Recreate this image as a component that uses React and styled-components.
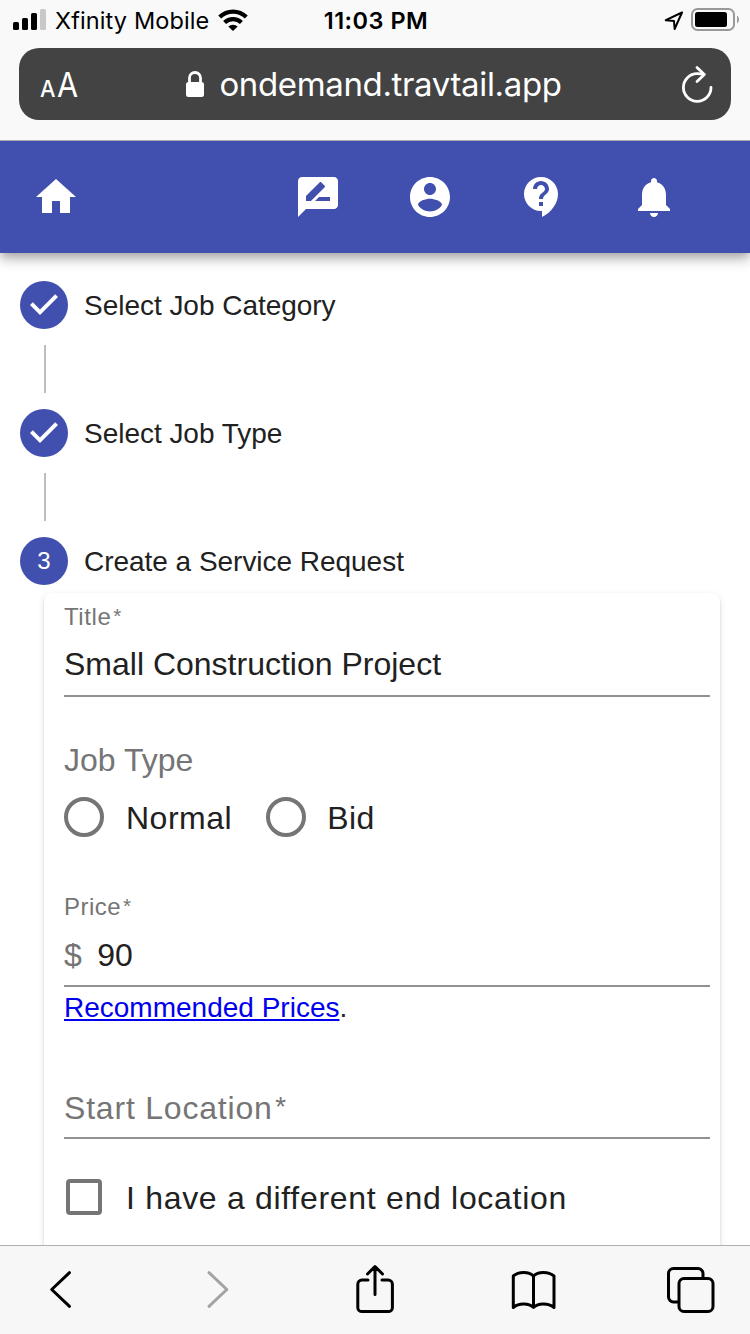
import React from "react";
import styled, { createGlobalStyle } from "styled-components";

const GlobalStyle = createGlobalStyle`
  * { box-sizing: border-box; }
  body { margin: 0; background: #fff; }
`;

const Screen = styled.div`
  width: 750px;
  height: 1334px;
  display: flex;
  flex-direction: column;
  overflow: hidden;
  background: #fff;
  color: #212121;
  font-family: "Liberation Sans", Arial, sans-serif;
`;

const Chrome = styled.header`
  position: relative;
  z-index: 2;
  flex: none;
  height: 141px;
  background: #f9f9f9;
  border-bottom: 1px solid #a9aaab;
  color: #000;
  font-family: Inter, sans-serif;
`;

const StatusBar = styled.div`
  display: grid;
  grid-template-columns: 1fr auto 1fr;
  align-items: center;
  height: 40px;
  padding: 0 11px 0 13px;
`;

const StatusGroup = styled.div`
  display: flex;
  align-items: center;
  justify-content: ${(p) => (p.$end ? "flex-end" : "flex-start")};
  gap: ${(p) => (p.$end ? 7 : 9)}px;
`;

const Carrier = styled.span`
  padding-top: 2px;
  font-size: 23.5px;
  line-height: 38px;
  letter-spacing: 0.12px;
  white-space: nowrap;
`;

const Clock = styled.span`
  padding-top: 2px;
  font-size: 23.5px;
  font-weight: 600;
  line-height: 38px;
  letter-spacing: 0.5px;
`;

const AddressBar = styled.div`
  display: grid;
  grid-template-columns: 60px 1fr 60px;
  align-items: center;
  height: 72px;
  margin: 8px 19px 0;
  padding: 0 18px 0 21px;
  border-radius: 20px;
  background: #434343;
  color: #fff;
`;

const TextSize = styled.div`
  display: flex;
  align-items: baseline;
  gap: 1px;
  padding-top: 2px;
  line-height: 70px;
`;

const Letter = styled.span`
  font-size: ${(p) => p.$size}px;
  font-weight: ${(p) => p.$weight};
  transform: scaleX(${(p) => p.$stretch});
  transform-origin: left;
`;

const Address = styled.div`
  display: flex;
  align-items: center;
  justify-content: center;
  gap: 14px;
  padding: 0 6px 4px 0;
  font-size: 33px;
  line-height: 68px;
  letter-spacing: -0.35px;
  white-space: nowrap;
`;

const ReloadSlot = styled.div`
  display: flex;
  justify-content: flex-end;
  padding-bottom: 3px;
`;

const AppBar = styled.nav`
  position: relative;
  z-index: 1;
  flex: none;
  display: flex;
  align-items: center;
  gap: 64px;
  height: 112px;
  padding: 0 72px 0 32px;
  background: #4150af;
  box-shadow: 0 4px 8px -2px rgba(0, 0, 0, 0.2), 0 8px 10px rgba(0, 0, 0, 0.14),
    0 2px 20px rgba(0, 0, 0, 0.12);
`;

const NavIcon = styled.svg`
  width: 48px;
  height: 48px;
  fill: #fff;
  margin-right: ${(p) => (p.$lead ? "auto" : "0")};
`;

const Stepper = styled.main`
  flex: 1;
  min-height: 0;
  overflow: hidden;
  padding: 28px 30px 0 20px;
`;

const StepRow = styled.div`
  display: flex;
  align-items: center;
  gap: 16px;
  height: 48px;
`;

const StepBadge = styled.div`
  display: flex;
  align-items: center;
  justify-content: center;
  width: 48px;
  height: 48px;
  border-radius: 50%;
  background: #4150af;
  color: #fff;
  font-size: 24px;
  svg { width: 48px; height: 48px; fill: #fff; }
`;

const StepLabel = styled.span`
  font-size: 28px;
  line-height: 40px;
  letter-spacing: -0.03px;
  padding-top: 2px;
`;

const Connector = styled.div`
  width: 2px;
  height: 48px;
  margin: 16px 0 16px 24px;
  background: #bdbdbd;
`;

const Card = styled.section`
  height: 760px;
  margin: 8px 0 0 24px;
  padding: 10px 10px 0 20px;
  border-radius: 8px;
  background: #fff;
  box-shadow: 0 4px 2px -2px rgba(0, 0, 0, 0.2), 0 2px 2px rgba(0, 0, 0, 0.14),
    0 2px 6px rgba(0, 0, 0, 0.12);
`;

const Field = styled.div`
  display: flex;
  flex-direction: column;
  border-bottom: 2px solid #919191;
  padding-bottom: ${(p) => p.$bottom}px;
  margin-top: ${(p) => p.$top || 0}px;
`;

const FieldLabel = styled.label`
  height: 28px;
  color: #757575;
  font-size: 24px;
  line-height: 28px;
  letter-spacing: ${(p) => p.$track}px;
`;

const Asterisk = styled.span`
  display: inline-block;
  margin-left: 0.09em;
  font-size: 0.86em;
  line-height: 1;
  vertical-align: 0.12em;
`;

const FieldValue = styled.div`
  display: flex;
  gap: 15.5px;
  margin-top: ${(p) => p.$top}px;
  font-size: 32px;
  line-height: 40px;
`;

const Caption = styled.div`
  height: 40px;
  color: #757575;
  font-size: 32px;
  line-height: 40px;
  letter-spacing: ${(p) => p.$track || 0}px;
  margin-top: ${(p) => p.$top || 0}px;
`;

const Muted = styled.span`
  color: #757575;
`;

const Options = styled.div`
  display: flex;
  align-items: center;
  gap: 34px;
  height: 40px;
  margin-top: ${(p) => p.$top}px;
`;

const Option = styled.label`
  display: flex;
  align-items: center;
  gap: ${(p) => p.$gap}px;
  font-size: 32px;
  line-height: 40px;
  letter-spacing: ${(p) => p.$track}px;
  padding-left: ${(p) => p.$inset || 0}px;
  white-space: nowrap;
`;

const OptionText = styled.span`
  padding-top: 2px;
`;

const Radio = styled.span`
  width: 40px;
  height: 40px;
  border: 4px solid #757575;
  border-radius: 50%;
`;

const Checkbox = styled.span`
  width: 36px;
  height: 36px;
  border: 4px solid #757575;
  border-radius: 4px;
`;

const Helper = styled.p`
  margin: 5px 0 0;
  font-size: 28px;
  line-height: 32px;
`;

const PriceLink = styled.a`
  color: #0000ee;
  text-decoration: underline;
  text-decoration-thickness: 2px;
  text-underline-offset: 2px;
  text-decoration-skip-ink: none;
`;

const Toolbar = styled.footer`
  position: relative;
  flex: none;
  display: flex;
  align-items: flex-start;
  justify-content: space-between;
  height: 89px;
  padding: 14px 30px 0;
  border-top: 1px solid #b0b0b0;
  background: #f7f7f7;
`;

const ToolIcon = styled.svg`
  width: 60px;
  height: 60px;
  fill: none;
  stroke: ${(p) => (p.$disabled ? "#a3a3a3" : "#000")};
  stroke-width: 3;
  stroke-linecap: round;
  stroke-linejoin: round;
`;

const HOME = "M10 20v-6h4v6h5v-8h3L12 3 2 12h3v8z";
const REVIEW =
  "M20 2H4c-1.1 0-1.99.9-1.99 2L2 22l4-4h14c1.1 0 2-.9 2-2V4c0-1.100-.9-2-2-2zM6 14v-2.470l6.880-6.880c.2-.2.510-.2.710 0l1.770 1.770c.2.2.2.510 0 .710L8.470 14H6zm12 0h-7.500l2-2H18v2z";
const ACCOUNT =
  "M12 2C6.48 2 2 6.48 2 12s4.48 10 10 10 10-4.48 10-10S17.52 2 12 2zm0 3c1.66 0 3 1.34 3 3s-1.34 3-3 3-3-1.34-3-3 1.34-3 3-3zm0 14.2c-2.5 0-4.71-1.28-6-3.22.03-1.99 4-3.08 6-3.08 1.99 0 5.97 1.09 6 3.08-1.29 1.94-3.5 3.22-6 3.22z";
const SUPPORT =
  "M11.5 2C6.81 2 3 5.81 3 10.5S6.81 19 11.5 19h.5v3c4.86-2.34 8-7 8-11.5C20 5.81 16.19 2 11.5 2zm1 14.5h-2v-2h2v2zm0-3.5h-2c0-3.25 3-3 3-5 0-1.1-.9-2-2-2s-2 .9-2 2h-2c0-2.21 1.79-4 4-4s4 1.79 4 4c0 2.5-3 2.75-3 5z";
const BELL =
  "M12 22c1.1 0 2-.9 2-2h-4c0 1.1.89 2 2 2zm6-6v-5c0-3.07-1.64-5.64-4.5-6.32V4c0-.83-.67-1.5-1.5-1.5s-1.5.67-1.5 1.5v.68C7.63 5.36 6 7.92 6 11v5l-2 2v1h16v-1l-2-2z";

const Nav = ({ d, lead }) => (
  <NavIcon viewBox="0 0 24 24" $lead={lead}>
    <path d={d} />
  </NavIcon>
);

const DoneStep = ({ children }) => (
  <>
    <StepRow>
      <StepBadge>
        <svg viewBox="0 0 24 24">
          <path d="M10 17l-5-5 1.4-1.4 3.6 3.6 7.6-7.6L19 8z" />
        </svg>
      </StepBadge>
      <StepLabel>{children}</StepLabel>
    </StepRow>
    <Connector />
  </>
);

const Signal = () => (
  <svg width="33" height="22" viewBox="0 0 33 22">
    <rect x="0" y="13" width="6" height="8" rx="1.5" />
    <rect x="9" y="9" width="6" height="12" rx="1.5" />
    <rect x="18" y="4" width="6" height="17" rx="1.5" />
    <rect x="27" y="0" width="6" height="21" rx="1.5" fill="#c8c8c8" />
  </svg>
);

const Wifi = () => (
  <svg width="30" height="22" viewBox="0 0 30 22" fill="none" stroke="#000" strokeWidth="4.2">
    <path d="M1.7 8a19 19 0 0 1 26.6 0" />
    <path d="M6.6 13.500a12 12 0 0 1 16.8 0" />
    <path d="M15 22l-4.700-4.400a6.700 6.700 0 0 1 9.400 0z" fill="#000" stroke="none" />
  </svg>
);

const Location = () => (
  <svg width="20" height="20" viewBox="0 0 20 20" fill="none" stroke="#000" strokeWidth="2" strokeLinejoin="round">
    <path d="M18 2.500L1.800 10.200l8.200.800.600 8z" />
  </svg>
);

const Battery = () => (
  <svg width="48" height="24" viewBox="0 0 48 24">
    <rect x="1" y="1" width="42" height="21" rx="5.5" fill="none" stroke="#999" strokeWidth="2" />
    <rect x="4" y="4" width="32" height="15" rx="2.5" />
    <path d="M46 7.5c2.6 1.6 2.6 6.4 0 8z" fill="#999" />
  </svg>
);

const Lock = () => (
  <svg width="20" height="28" viewBox="0 0 20 28">
    <rect x="1" y="12" width="18" height="15" rx="2.5" fill="#fff" />
    <path d="M4.500 13V8a5.500 5.500 0 0 1 11 0V13" fill="none" stroke="#fff" strokeWidth="2.8" />
  </svg>
);

const Reload = () => (
  <svg width="33" height="40" viewBox="0 0 33 40" fill="none" stroke="#fff" strokeWidth="2.8" strokeLinecap="round" strokeLinejoin="round">
    <path d="M31 22.500A13.800 13.800 0 1 1 17.200 8.700q3.600 0 6.800.6" />
    <path d="M17 2.500l7.300 7-7.300 7" />
  </svg>
);

export default function App() {
  return (
    <Screen>
      <GlobalStyle />
      <Chrome>
        <StatusBar>
          <StatusGroup>
            <Signal />
            <Carrier>Xfinity Mobile</Carrier>
            <Wifi />
          </StatusGroup>
          <Clock>11:03 PM</Clock>
          <StatusGroup $end>
            <Location />
            <Battery />
          </StatusGroup>
        </StatusBar>
        <AddressBar>
          <TextSize>
            <Letter $size={23} $weight={500} $stretch={0.95}>A</Letter>
            <Letter $size={34} $weight={400} $stretch={0.9}>A</Letter>
          </TextSize>
          <Address>
            <Lock />
            <span>ondemand.travtail.app</span>
          </Address>
          <ReloadSlot>
            <Reload />
          </ReloadSlot>
        </AddressBar>
      </Chrome>

      <AppBar>
        <Nav d={HOME} lead />
        <Nav d={REVIEW} />
        <Nav d={ACCOUNT} />
        <Nav d={SUPPORT} />
        <Nav d={BELL} />
      </AppBar>

      <Stepper>
        <DoneStep>Select Job Category</DoneStep>
        <DoneStep>Select Job Type</DoneStep>
        <StepRow>
          <StepBadge>3</StepBadge>
          <StepLabel>Create a Service Request</StepLabel>
        </StepRow>
        <Card>
          <Field $bottom={11}>
            <FieldLabel $track={0.6}>
              Title<Asterisk>*</Asterisk>
            </FieldLabel>
            <FieldValue $top={13}>Small Construction Project</FieldValue>
          </Field>
          <Caption $top={43}>Job Type</Caption>
          <Options $top={17}>
            <Option $gap={22} $track={0.5}>
              <Radio />
              <OptionText>Normal</OptionText>
            </Option>
            <Option $gap={21} $track={0.5}>
              <Radio />
              <OptionText>Bid</OptionText>
            </Option>
          </Options>
          <Field $bottom={10} $top={56}>
            <FieldLabel $track={0.5}>
              Price<Asterisk>*</Asterisk>
            </FieldLabel>
            <FieldValue $top={14}>
              <Muted>$</Muted>
              <span>90</span>
            </FieldValue>
          </Field>
          <Helper>
            <PriceLink>Recommended Prices</PriceLink>.
          </Helper>
          <Field $bottom={9} $top={64}>
            <Caption $track={0.8}>
              Start Location<Asterisk>*</Asterisk>
            </Caption>
          </Field>
          <Options $top={38}>
            <Option $gap={24} $inset={2} $track={0.7}>
              <Checkbox />
              <OptionText>I have a different end location</OptionText>
            </Option>
          </Options>
        </Card>
      </Stepper>

      <Toolbar>
        <ToolIcon viewBox="0 0 60 60">
          <path d="M39.5 12.7L21.7 29.5l17.8 16.8" />
        </ToolIcon>
        <ToolIcon viewBox="0 0 60 60" $disabled>
          <path d="M21 12.7l17.8 16.8L21 46.3" />
        </ToolIcon>
        <ToolIcon viewBox="0 0 60 60">
          <path d="M23 20h-6a4.2 4.2 0 0 0-4.2 4.2v23.2a4.2 4.2 0 0 0 4.2 4.2h26.2a4.2 4.2 0 0 0 4.2-4.2V24.2a4.2 4.2 0 0 0-4.2-4.2H37" />
          <path d="M30 34.5V7M22.5 14L30 6.5l7.5 7.5" />
        </ToolIcon>
        <ToolIcon viewBox="0 0 60 60">
          <path d="M30.5 16C26 11.500 16 11 10.300 16v31.500c5.700-4.800 15.700-4.300 20.200 0 4.500-4.300 14.500-4.800 20.500 0V16C45 11 35 11.500 30.500 16zM30.500 16v31" />
        </ToolIcon>
        <ToolIcon viewBox="0 0 60 60">
          <path d="M18 42h-4.500a5 5 0 0 1-5-5V13.500a5 5 0 0 1 5-5H38a5 5 0 0 1 5 5V18" />
          <rect x="19" y="18.500" width="34" height="33" rx="5" />
        </ToolIcon>
      </Toolbar>
    </Screen>
  );
}
